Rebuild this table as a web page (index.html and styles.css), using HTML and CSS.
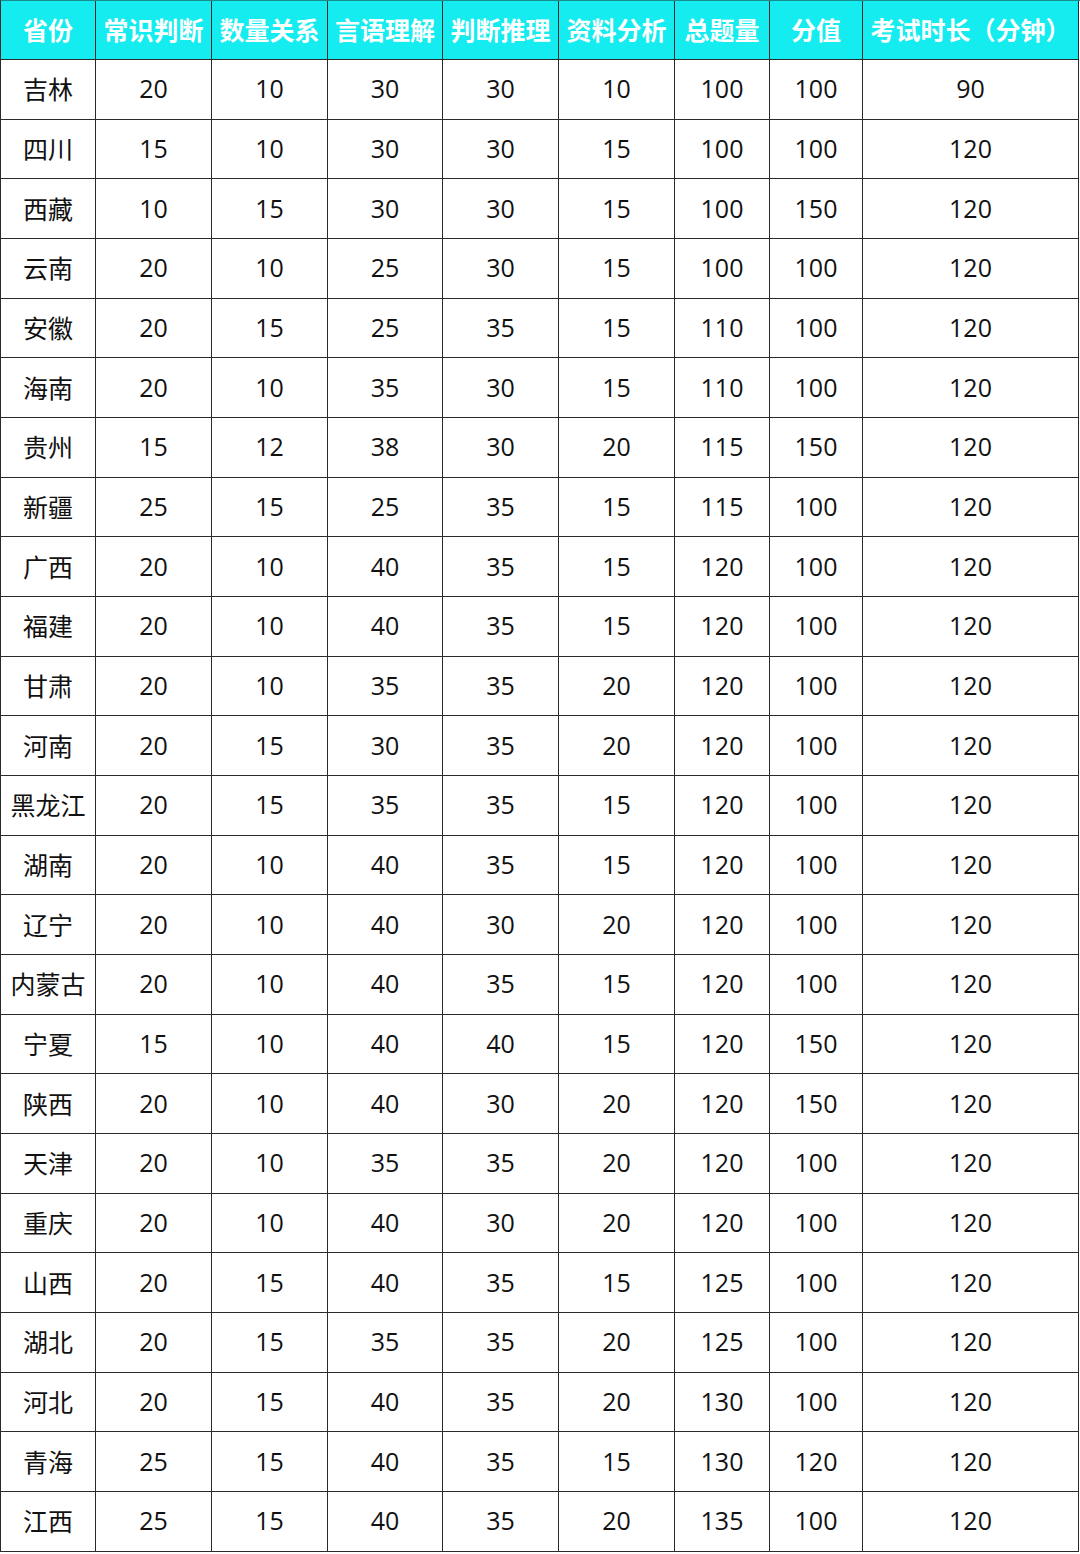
FILE: index.html
```html
<!DOCTYPE html>
<html lang="zh-CN">
<head>
<meta charset="utf-8">
<title>各省考试题量</title>
<link rel="stylesheet" href="styles.css">
</head>
<body>
<div class="grid">
<div class="h">省份</div><div class="h">常识判断</div><div class="h">数量关系</div><div class="h">言语理解</div><div class="h">判断推理</div><div class="h">资料分析</div><div class="h">总题量</div><div class="h">分值</div><div class="h">考试时长（分钟）</div>
<div class="c">吉林</div><div class="c">20</div><div class="c">10</div><div class="c">30</div><div class="c">30</div><div class="c">10</div><div class="c">100</div><div class="c">100</div><div class="c">90</div>
<div class="c">四川</div><div class="c">15</div><div class="c">10</div><div class="c">30</div><div class="c">30</div><div class="c">15</div><div class="c">100</div><div class="c">100</div><div class="c">120</div>
<div class="c">西藏</div><div class="c">10</div><div class="c">15</div><div class="c">30</div><div class="c">30</div><div class="c">15</div><div class="c">100</div><div class="c">150</div><div class="c">120</div>
<div class="c">云南</div><div class="c">20</div><div class="c">10</div><div class="c">25</div><div class="c">30</div><div class="c">15</div><div class="c">100</div><div class="c">100</div><div class="c">120</div>
<div class="c">安徽</div><div class="c">20</div><div class="c">15</div><div class="c">25</div><div class="c">35</div><div class="c">15</div><div class="c">110</div><div class="c">100</div><div class="c">120</div>
<div class="c">海南</div><div class="c">20</div><div class="c">10</div><div class="c">35</div><div class="c">30</div><div class="c">15</div><div class="c">110</div><div class="c">100</div><div class="c">120</div>
<div class="c">贵州</div><div class="c">15</div><div class="c">12</div><div class="c">38</div><div class="c">30</div><div class="c">20</div><div class="c">115</div><div class="c">150</div><div class="c">120</div>
<div class="c">新疆</div><div class="c">25</div><div class="c">15</div><div class="c">25</div><div class="c">35</div><div class="c">15</div><div class="c">115</div><div class="c">100</div><div class="c">120</div>
<div class="c">广西</div><div class="c">20</div><div class="c">10</div><div class="c">40</div><div class="c">35</div><div class="c">15</div><div class="c">120</div><div class="c">100</div><div class="c">120</div>
<div class="c">福建</div><div class="c">20</div><div class="c">10</div><div class="c">40</div><div class="c">35</div><div class="c">15</div><div class="c">120</div><div class="c">100</div><div class="c">120</div>
<div class="c">甘肃</div><div class="c">20</div><div class="c">10</div><div class="c">35</div><div class="c">35</div><div class="c">20</div><div class="c">120</div><div class="c">100</div><div class="c">120</div>
<div class="c">河南</div><div class="c">20</div><div class="c">15</div><div class="c">30</div><div class="c">35</div><div class="c">20</div><div class="c">120</div><div class="c">100</div><div class="c">120</div>
<div class="c">黑龙江</div><div class="c">20</div><div class="c">15</div><div class="c">35</div><div class="c">35</div><div class="c">15</div><div class="c">120</div><div class="c">100</div><div class="c">120</div>
<div class="c">湖南</div><div class="c">20</div><div class="c">10</div><div class="c">40</div><div class="c">35</div><div class="c">15</div><div class="c">120</div><div class="c">100</div><div class="c">120</div>
<div class="c">辽宁</div><div class="c">20</div><div class="c">10</div><div class="c">40</div><div class="c">30</div><div class="c">20</div><div class="c">120</div><div class="c">100</div><div class="c">120</div>
<div class="c">内蒙古</div><div class="c">20</div><div class="c">10</div><div class="c">40</div><div class="c">35</div><div class="c">15</div><div class="c">120</div><div class="c">100</div><div class="c">120</div>
<div class="c">宁夏</div><div class="c">15</div><div class="c">10</div><div class="c">40</div><div class="c">40</div><div class="c">15</div><div class="c">120</div><div class="c">150</div><div class="c">120</div>
<div class="c">陕西</div><div class="c">20</div><div class="c">10</div><div class="c">40</div><div class="c">30</div><div class="c">20</div><div class="c">120</div><div class="c">150</div><div class="c">120</div>
<div class="c">天津</div><div class="c">20</div><div class="c">10</div><div class="c">35</div><div class="c">35</div><div class="c">20</div><div class="c">120</div><div class="c">100</div><div class="c">120</div>
<div class="c">重庆</div><div class="c">20</div><div class="c">10</div><div class="c">40</div><div class="c">30</div><div class="c">20</div><div class="c">120</div><div class="c">100</div><div class="c">120</div>
<div class="c">山西</div><div class="c">20</div><div class="c">15</div><div class="c">40</div><div class="c">35</div><div class="c">15</div><div class="c">125</div><div class="c">100</div><div class="c">120</div>
<div class="c">湖北</div><div class="c">20</div><div class="c">15</div><div class="c">35</div><div class="c">35</div><div class="c">20</div><div class="c">125</div><div class="c">100</div><div class="c">120</div>
<div class="c">河北</div><div class="c">20</div><div class="c">15</div><div class="c">40</div><div class="c">35</div><div class="c">20</div><div class="c">130</div><div class="c">100</div><div class="c">120</div>
<div class="c">青海</div><div class="c">25</div><div class="c">15</div><div class="c">40</div><div class="c">35</div><div class="c">15</div><div class="c">130</div><div class="c">120</div><div class="c">120</div>
<div class="c">江西</div><div class="c">25</div><div class="c">15</div><div class="c">40</div><div class="c">35</div><div class="c">20</div><div class="c">135</div><div class="c">100</div><div class="c">120</div>
</div>
</body>
</html>
```
FILE: styles.css
```css
html, body {
  margin: 0;
  padding: 0;
  background: #ffffff;
}
.grid {
  display: grid;
  width: 1079px;
  grid-template-columns: 95px 116px 116px 115px 116px 116px 95px 93px 216px;
  grid-template-rows: 59px repeat(25, 59.68px);
  border-left: 1px solid #2a2a2a;
  border-top: 1px solid #1a8a8c;
  font-family: "Open Sans", "Noto Sans CJK SC", sans-serif;
}
.h, .c {
  display: flex;
  align-items: center;
  justify-content: center;
  box-sizing: border-box;
  border-right: 1px solid #2a2a2a;
  border-bottom: 1px solid #2a2a2a;
  white-space: nowrap;
  overflow: hidden;
}
.h {
  background: #14ecef;
  color: #ffffff;
  font-weight: 700;
  font-size: 25px;
  font-family: "Noto Sans CJK SC", sans-serif;
  padding-bottom: 3px;
}
.c {
  color: #111111;
  font-size: 25px;
  padding-bottom: 2px;
}
```
